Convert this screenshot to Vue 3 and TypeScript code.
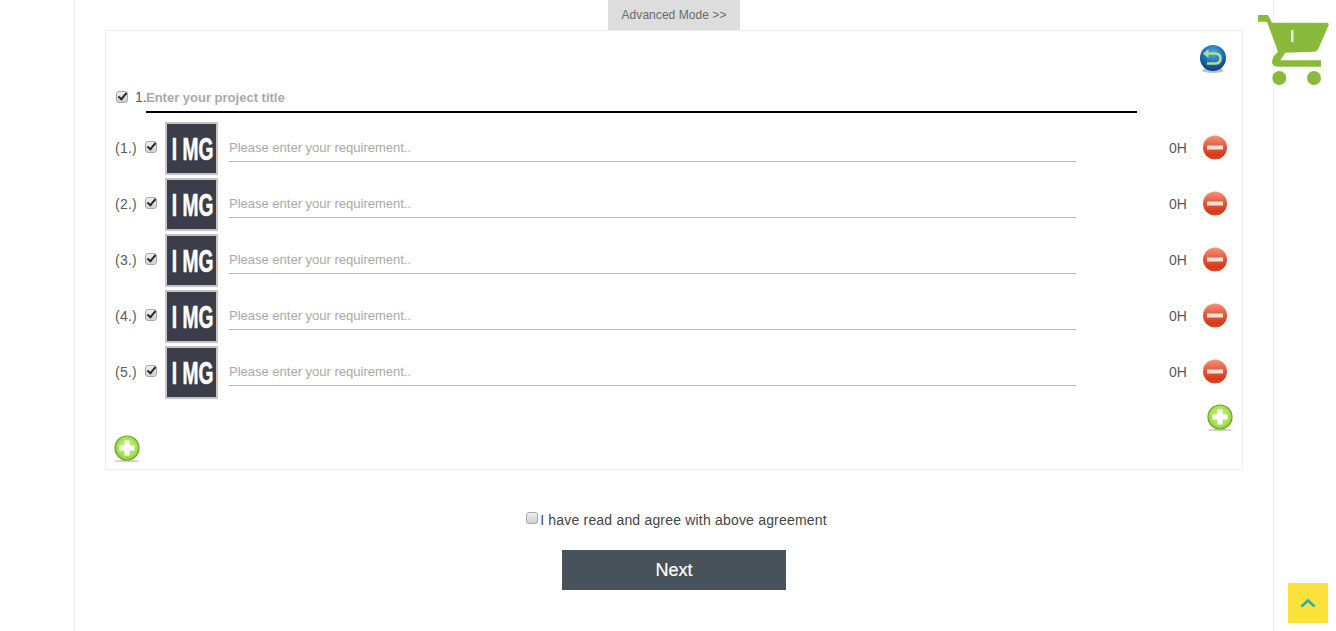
<script setup lang="ts">
const rows: number[] = [1, 2, 3, 4, 5]
</script>

<template>
  <div class="page">
    <div class="tab">Advanced Mode &gt;&gt;</div>

    <section class="panel">
      <div class="top-row">
        <svg class="icon back" viewBox="0 0 28 32" aria-label="Back">
          <defs>
            <radialGradient id="blueBall" cx="50%" cy="30%" r="72%">
              <stop offset="0" stop-color="#55ace2" />
              <stop offset="0.5" stop-color="#1d74ba" />
              <stop offset="1" stop-color="#0b3a72" />
            </radialGradient>
          </defs>
          <ellipse cx="14" cy="25.500" rx="10.500" ry="2.500" fill="#7d93a8" opacity="0.6" />
          <circle cx="14" cy="13" r="13" fill="url(#blueBall)" />
          <path d="M8 8.500H16Q21.500 8.500 21.500 13.500Q21.500 18.500 16 18.500H8" fill="none" stroke="#b9dc85" stroke-width="2.600" />
          <path d="M9.500 4 4 8.500 9.500 13Z" fill="#b9dc85" />
        </svg>
      </div>

      <div class="title-row">
        <input class="check" type="checkbox" checked />
        <span class="title-no">1.</span>
        <input class="title-input" type="text" placeholder="Enter your project title" />
      </div>

      <div v-for="n in rows" :key="n" class="req-row">
        <span class="req-no">({{ n }}.)</span>
        <input class="check" type="checkbox" checked />
        <div class="thumb"><span>I MG</span></div>
        <input class="req-input" type="text" placeholder="Please enter your requirement.." />
        <span class="hours">0H</span>
        <svg class="icon minus" viewBox="0 0 26 26" aria-label="Remove">
          <defs>
            <linearGradient :id="`redBall${n}`" x1="0" y1="0" x2="0" y2="1">
              <stop offset="0" stop-color="#f3957e" />
              <stop offset="0.45" stop-color="#e8563a" />
              <stop offset="0.85" stop-color="#d03a18" />
              <stop offset="1" stop-color="#e05026" />
            </linearGradient>
          </defs>
          <circle cx="13" cy="12.500" r="12" :fill="`url(#redBall${n})`" />
          <rect x="5" y="10.500" width="16" height="4" fill="#fbe4da" />
        </svg>
      </div>

      <div class="add-right">
        <svg class="icon plus" viewBox="0 0 28 28" aria-label="Add item">
          <defs>
            <radialGradient id="greenBallA" cx="50%" cy="45%" r="58%">
              <stop offset="0" stop-color="#d4f29a" />
              <stop offset="0.7" stop-color="#a6e04e" />
              <stop offset="1" stop-color="#84c432" />
            </radialGradient>
          </defs>
          <ellipse cx="14" cy="26" rx="13" ry="1.200" fill="#999" opacity="0.5" />
          <circle cx="14" cy="13" r="12" fill="url(#greenBallA)" stroke="#6aa82a" stroke-width="1.200" />
          <path d="M11.500 5.500h5V10.500h5v5h-5V20.500h-5V15.500H6.500v-5h5z" fill="#fff" />
        </svg>
      </div>
      <div class="add-left">
        <svg class="icon plus" viewBox="0 0 28 28" aria-label="Add section">
          <defs>
            <radialGradient id="greenBallB" cx="50%" cy="45%" r="58%">
              <stop offset="0" stop-color="#d4f29a" />
              <stop offset="0.7" stop-color="#a6e04e" />
              <stop offset="1" stop-color="#84c432" />
            </radialGradient>
          </defs>
          <ellipse cx="14" cy="26" rx="13" ry="1.200" fill="#999" opacity="0.5" />
          <circle cx="14" cy="13" r="12" fill="url(#greenBallB)" stroke="#6aa82a" stroke-width="1.200" />
          <path d="M11.500 5.500h5V10.500h5v5h-5V20.500h-5V15.500H6.500v-5h5z" fill="#fff" />
        </svg>
      </div>
    </section>

    <label class="agree">
      <input class="check" type="checkbox" />
      <span>I have read and agree with above agreement</span>
    </label>

    <button class="next" type="button">Next</button>
  </div>

  <div class="cart">
    <svg viewBox="0 0 71 70" width="71" height="70" aria-hidden="true">
      <path d="M0 0H10L14 7.700H68.500Q71.500 7.700 70.500 10.500L60.500 33.500Q59 36.700 55.500 36.700L27.300 37.700L22.300 45.300H63V51.700H20.700Q14 51.700 14 46.700Q14 42 20 36.700L9 6.700H0Z" fill="#8aba3c" />
      <circle cx="21.300" cy="63" r="7" fill="#8aba3c" />
      <circle cx="56" cy="63" r="7" fill="#8aba3c" />
    </svg>
    <span class="cart-count">I</span>
  </div>

  <button class="to-top" type="button" aria-label="Back to top">
    <svg viewBox="0 0 16 10" width="16" height="10">
      <path d="M1.500 8.500 8 2.500l6.500 6" fill="none" stroke="#1fb0b4" stroke-width="2.600" />
    </svg>
  </button>
</template>

<style scoped>
.page {
  box-sizing: border-box;
  width: 1200px;
  height: 631px;
  margin-left: 74px;
  border-left: 1px solid #eee;
  border-right: 1px solid #eee;
  display: flex;
  flex-direction: column;
  align-items: center;
  font-family: "Liberation Sans", Arial, sans-serif;
  color: #444;
  font-size: 14px;
}

.tab {
  width: 132px;
  height: 30px;
  flex: none;
  background: #ddd;
  color: #6a6a6a;
  font-size: 12px;
  letter-spacing: 0.05px;
  line-height: 30px;
  text-align: center;
}

.panel {
  box-sizing: border-box;
  width: 1138px;
  height: 440px;
  flex: none;
  border: 1px solid #eee;
  display: flex;
  flex-direction: column;
}

.icon {
  display: block;
  flex: none;
}

.top-row {
  height: 51px;
  display: flex;
  justify-content: flex-end;
  align-items: flex-start;
  padding: 14px 15px 0 0;
  box-sizing: border-box;
}

.back {
  width: 28px;
  height: 32px;
}

.check {
  appearance: none;
  -webkit-appearance: none;
  position: relative;
  box-sizing: border-box;
  flex: none;
  width: 12px;
  height: 12px;
  margin: 0;
  border: 1px solid #a8a8a8;
  border-radius: 3px;
  background: linear-gradient(#f0f0f0, #cfcfcf);
}

.check:checked::after {
  content: "";
  position: absolute;
  left: 3px;
  top: -1px;
  width: 3px;
  height: 7px;
  border: solid #2c2c2c;
  border-width: 0 2px 2px 0;
  transform: rotate(40deg);
}

.title-row {
  height: 31px;
  display: flex;
  align-items: center;
  padding-left: 10px;
  flex: none;
}

.title-row .check {
  margin-top: -2px;
}

.title-no {
  margin-left: 7px;
  width: 11px;
  margin-top: -2px;
  color: #5a5a5a;
}

.title-input {
  box-sizing: border-box;
  width: 991px;
  height: 31px;
  padding: 2px 0 0;
  border: 0;
  border-bottom: 2px solid #000;
  outline: 0;
  background: none;
  font: bold 13px "Liberation Sans", Arial, sans-serif;
  color: #444;
}

.title-input::placeholder {
  color: #a9a9a9;
  opacity: 1;
}

.req-row {
  height: 53px;
  flex: none;
  display: flex;
  align-items: center;
  padding-left: 9px;
  margin-bottom: 3px;
}

.title-row + .req-row {
  margin-top: 9px;
}

.req-no {
  width: 30px;
  flex: none;
  color: #5a5a5a;
  letter-spacing: 0.25px;
  margin-top: -2px;
}

.req-row .check {
  margin-top: -3px;
  margin-right: 1px;
}

.thumb {
  box-sizing: border-box;
  width: 53px;
  height: 53px;
  margin-left: 7px;
  flex: none;
  border: 2px solid #c6c6c6;
  background: #3b3d4b;
  color: #fff;
  display: flex;
  align-items: center;
  justify-content: center;
  overflow: hidden;
}

.thumb span {
  display: inline-block;
  font-size: 31px;
  font-weight: 700;
  line-height: 1;
  white-space: nowrap;
  -webkit-text-stroke: 0.6px #fff;
  transform: translate(1px, 1px) scaleX(0.62);
}

.req-input {
  box-sizing: border-box;
  width: 847px;
  height: 27px;
  margin-left: 11px;
  padding: 0 0 2px;
  flex: none;
  border: 0;
  border-bottom: 1px solid #bbb;
  outline: 0;
  background: none;
  font: 13px "Liberation Sans", Arial, sans-serif;
  color: #444;
}

.req-input::placeholder {
  color: #a9a9a9;
  opacity: 1;
}

.hours {
  width: 19px;
  margin-left: 93px;
  margin-top: -2px;
  flex: none;
  color: #5a5a5a;
  white-space: nowrap;
}

.minus {
  width: 26px;
  height: 26px;
  margin-left: 14px;
  margin-top: -1px;
}

.add-right {
  display: flex;
  justify-content: flex-end;
  padding-right: 8px;
  margin-top: 2px;
  flex: none;
}

.plus {
  width: 28px;
  height: 28px;
}

.add-left {
  padding-left: 7px;
  margin-top: 3px;
  flex: none;
}

.agree {
  display: flex;
  align-items: center;
  height: 20px;
  margin-top: 40px;
  margin-left: 4px;
  flex: none;
  color: #444;
  letter-spacing: 0.19px;
}

.agree .check {
  margin-right: 3px;
  margin-top: -4px;
  transform: translateX(1px);
}

.next {
  width: 224px;
  height: 40px;
  margin-top: 20px;
  flex: none;
  border: 0;
  padding: 0;
  background: #47525b;
  color: #fff;
  font: 18px "Liberation Sans", Arial, sans-serif;
  -webkit-text-stroke: 0.2px #fff;
}

.cart {
  position: fixed;
  left: 1258px;
  top: 15px;
  width: 71px;
  height: 70px;
}

.cart svg {
  display: block;
}

.cart-count {
  position: absolute;
  left: 32px;
  top: 14px;
  font: bold 16px/16px "Liberation Sans", Arial, sans-serif;
  color: #e8efd6;
}

.to-top {
  position: fixed;
  left: 1288px;
  top: 583px;
  width: 40px;
  height: 40px;
  border: 0;
  padding: 0;
  background: #fde23c;
  display: flex;
  align-items: center;
  justify-content: center;
}
</style>

<style>
html,
body {
  margin: 0;
  overflow: hidden;
  background: #fff;
}
</style>
